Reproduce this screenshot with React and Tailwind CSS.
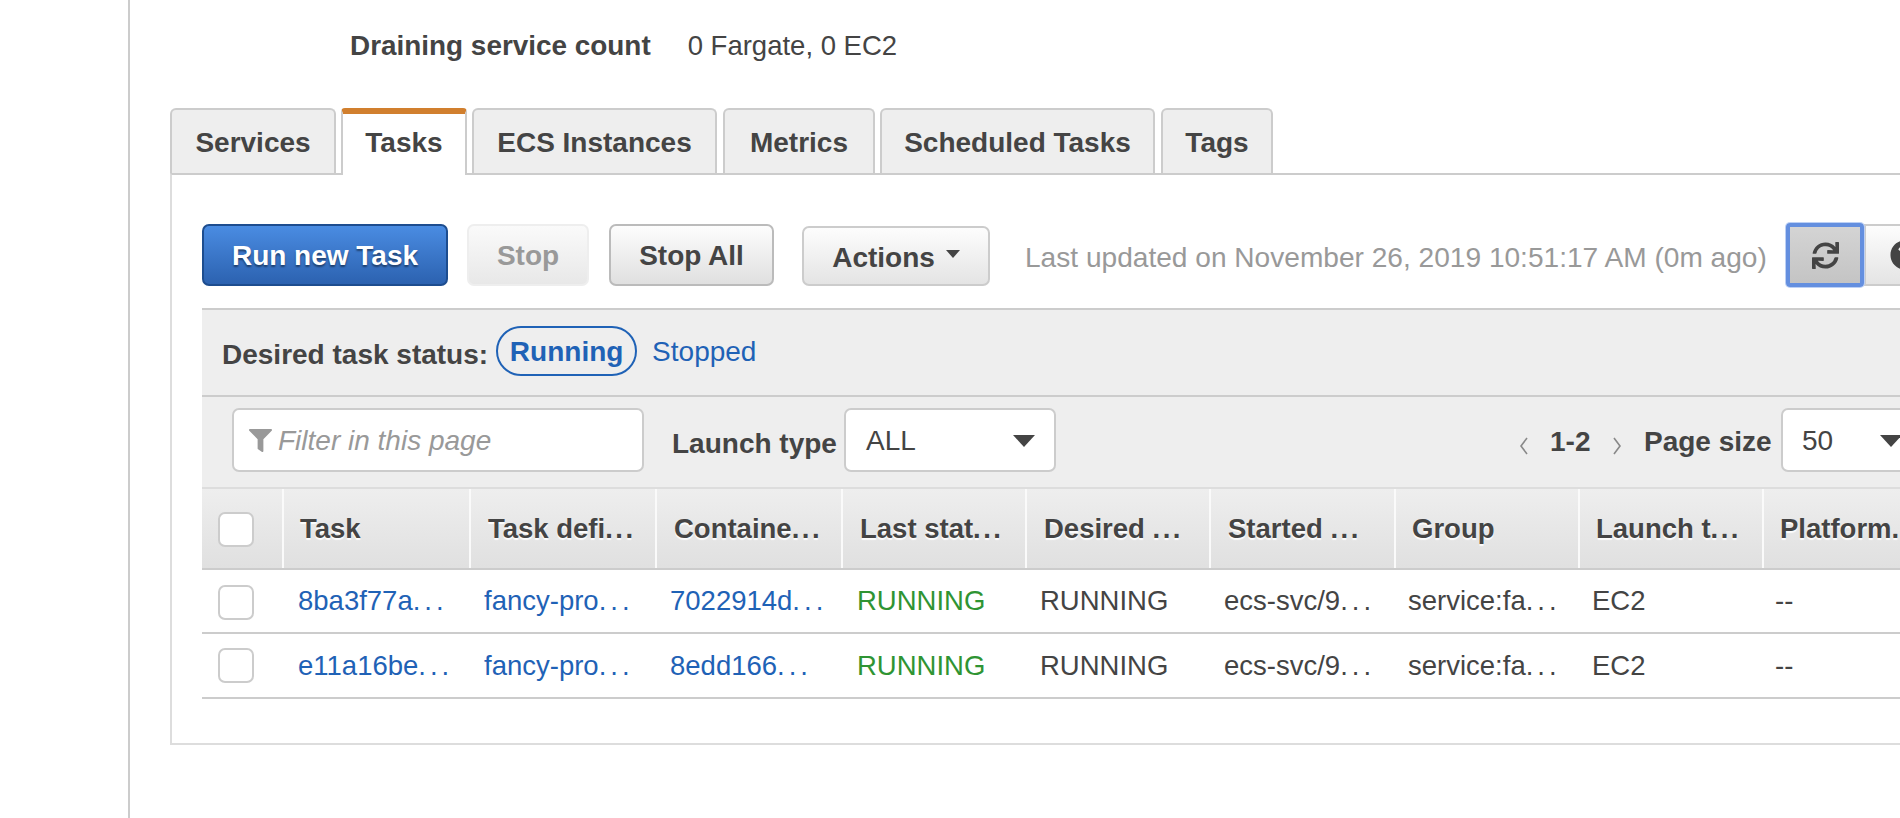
import React from "react";
import { FaFilter, FaSync, FaQuestionCircle } from "react-icons/fa";

const tabs = [
  { label: "Services", w: "w-[166px]", ml: "" },
  { label: "Tasks", w: "w-[126px]", ml: "ml-[5px]", active: true },
  { label: "ECS Instances", w: "w-[245px]", ml: "ml-[5px]" },
  { label: "Metrics", w: "w-[152px]", ml: "ml-[6px]" },
  { label: "Scheduled Tasks", w: "w-[275px]", ml: "ml-[5px]" },
  { label: "Tags", w: "w-[112px]", ml: "ml-[6px]" },
];

const grid = "grid grid-cols-[80px_187px_186px_186px_184px_184px_185px_184px_184px_200px]";
const headers = [
  ["Task", "", "pl-[16px]"],
  ["Task defi", "...", "pl-[17px]"],
  ["Containe", "...", "pl-[17px]"],
  ["Last stat", "...", "pl-[17px]"],
  ["Desired ", "...", "pl-[17px]"],
  ["Started ", "...", "pl-[17px]"],
  ["Group", "", "pl-[16px]"],
  ["Launch t", "...", "pl-[16px]"],
  ["Platform", "...", "pl-[16px]"],
];
const rows = [
  ["8ba3f77a", "fancy-pro", "7022914d"],
  ["e11a16be", "fancy-pro", "8edd166"],
];

function Dots({ w = "tracking-[4px]" }) {
  return <span className={w}>...</span>;
}

function Checkbox() {
  return <div className="w-[36px] h-[35px] rounded-[7px] border-2 border-[#ccc] bg-white" />;
}

function Caret() {
  return <div className="w-0 h-0 border-x-[11px] border-x-transparent border-t-[12px] border-t-[#444]" />;
}

function Chevron({ d }) {
  return (
    <svg width="12" height="18" viewBox="0 0 12 18" className="shrink-0 mt-[29px]">
      <polyline points={d} fill="none" stroke="#888" strokeWidth="1.6" />
    </svg>
  );
}

function Row({ cells, h, border, boxOffset }) {
  return (
    <div className={`${grid} ${h} ${border} items-center text-[27.5px]`}>
      <div className={`pl-[16px] ${boxOffset}`}><Checkbox /></div>
      <a className="pl-[16px] text-[#1f62b6] whitespace-nowrap">{cells[0]}<Dots /></a>
      <a className="pl-[15px] text-[#1f62b6] whitespace-nowrap">{cells[1]}<Dots /></a>
      <a className="pl-[15px] text-[#1f62b6] whitespace-nowrap">{cells[2]}<Dots /></a>
      <div className="pl-[16px] text-[#2f9433]">RUNNING</div>
      <div className="pl-[15px]">RUNNING</div>
      <div className="pl-[15px] whitespace-nowrap">ecs-svc/9<Dots /></div>
      <div className="pl-[14px] whitespace-nowrap">service:fa<Dots /></div>
      <div className="pl-[14px]">EC2</div>
      <div className="pl-[13px]">--</div>
    </div>
  );
}

export default function App() {
  return (
    <div className="w-[1900px] h-[818px] overflow-hidden bg-white text-[#444] text-[28px] leading-none font-['Liberation_Sans',Arial,sans-serif]">
      <div className="ml-[128px] h-full border-l-2 border-[#ccc] pl-[40px]">
        <div className="h-[108px] pt-[32px] flex">
          <span className="ml-[180px] font-bold text-[27.9px]">Draining service count</span>
          <span className="ml-[37px] text-[27.5px]">0 Fargate, 0 EC2</span>
        </div>

        <div className="flex h-[65px] relative z-10">
          {tabs.map((t) =>
            t.active ? (
              <div
                key={t.label}
                className={`${t.w} ${t.ml} h-[67px] bg-white border-t-[6px] border-t-[#d17f2e] border-x-2 border-x-[#ccc] rounded-t-[4px] font-bold flex items-center justify-center pb-[4px]`}
              >
                {t.label}
              </div>
            ) : (
              <div
                key={t.label}
                className={`${t.w} ${t.ml} h-[65px] bg-[#eee] border-2 border-b-0 border-[#ccc] rounded-t-[6px] font-bold flex items-center justify-center pt-[2px] text-[#444]`}
              >
                {t.label}
              </div>
            )
          )}
        </div>

        <div className="w-[1800px] h-[572px] border-2 border-[#ddd] border-t-[#ccc] pl-[30px] pt-[49px]">
          <div className="flex h-[84px] items-start">
            <button className="w-[246px] shrink-0 h-[62px] rounded-[7px] border-2 border-[#1d4d8f] bg-gradient-to-b from-[#4a8ce2] to-[#2c62b0] text-white font-bold pt-[1px] [text-shadow:0_2px_2px_rgba(0,0,0,0.45)]">
              Run new Task
            </button>
            <button className="ml-[19px] w-[122px] shrink-0 h-[62px] rounded-[7px] border-2 border-[#eee] bg-gradient-to-b from-[#fafafa] to-[#e8e8e8] text-[#999] font-bold pt-[2px]">
              Stop
            </button>
            <button className="ml-[20px] w-[165px] shrink-0 h-[62px] rounded-[7px] border-2 border-[#bbb] bg-gradient-to-b from-[#fdfdfd] to-[#e0e0e0] font-bold pt-[2px]">
              Stop All
            </button>
            <button className="ml-[28px] mt-[2px] w-[188px] shrink-0 h-[60px] rounded-[7px] border-2 border-[#ccc] bg-gradient-to-b from-[#fdfdfd] to-[#e4e4e4] font-bold flex items-center justify-center gap-[11px] pt-[3px]">
              Actions
              <span className="w-0 h-0 mb-[8px] border-x-[7px] border-x-transparent border-t-[8px] border-t-[#444]" />
            </button>
            <span className="ml-[35px] w-[742px] shrink-0 mt-[20px] text-[28.1px] text-[#999] whitespace-nowrap">
              Last updated on November 26, 2019 10:51:17 AM (0m ago)
            </span>
            <button className="ml-[19px] -mt-[1px] relative z-10 w-[78px] h-[64px] shrink-0 rounded-[4px] border-[4px] border-[#648fdf] bg-gradient-to-b from-[#d4d4d4] to-[#c4c4c4] shadow-[0_0_0_1px_#bcd0f5] flex items-center justify-center">
              <FaSync className="text-[27px] text-[#444]" />
            </button>
            <button className="w-[80px] h-[62px] shrink-0 border-2 border-[#ccc] bg-gradient-to-b from-[#fdfdfd] to-[#e4e4e4] flex items-center pl-[24px]">
              <FaQuestionCircle className="text-[30px] text-[#444]" />
            </button>
          </div>

          <div className="h-[89px] border-t-2 border-b-2 border-[#ccc] bg-[#eee] flex items-center">
            <span className="ml-[20px] mt-[5px] font-bold whitespace-nowrap">Desired task status:</span>
            <span className="ml-[8px] w-[141px] h-[50px] -mt-[4px] pt-[2px] rounded-[25px] border-2 border-[#1f62b6] flex items-center justify-center text-[#1f62b6] font-bold">
              Running
            </span>
            <span className="ml-[15px] -mt-[2px] text-[#1f62b6]">Stopped</span>
          </div>

          <div className="h-[90px] bg-[#eee] flex items-start pt-[11px]">
            <div className="ml-[30px] w-[412px] shrink-0 h-[64px] rounded-[7px] border-2 border-[#ccc] bg-white flex items-center pl-[15px] pt-[1px]">
              <FaFilter className="text-[23px] text-[#999]" />
              <span className="ml-[6px] italic text-[#999]">Filter in this page</span>
            </div>
            <span className="ml-[28px] w-[164px] shrink-0 mt-[22px] font-bold whitespace-nowrap">Launch type</span>
            <div className="ml-[8px] w-[212px] shrink-0 h-[64px] rounded-[7px] border-2 border-[#ccc] bg-white flex items-center justify-between pl-[20px] pr-[19px] pt-[1px]">
              <span>ALL</span>
              <Caret />
            </div>
            <span className="ml-[462px] shrink-0 flex"><Chevron d="9,1 3,9 9,17" /></span>
            <span className="ml-[20px] w-[42px] shrink-0 mt-[20px] font-bold whitespace-nowrap">1-2</span>
            <span className="ml-[19px] shrink-0 flex"><Chevron d="3,1 9,9 3,17" /></span>
            <span className="ml-[21px] w-[128px] shrink-0 mt-[20px] font-bold whitespace-nowrap">Page size</span>
            <div className="ml-[9px] w-[200px] h-[64px] shrink-0 rounded-[7px] border-2 border-[#ccc] bg-white flex items-center pl-[19px] pt-[1px]">
              <span>50</span>
              <span className="ml-[47px]"><Caret /></span>
            </div>
          </div>

          <div className={`${grid} h-[83px] border-t-2 border-b-2 border-t-[#ddd] border-b-[#ccc] bg-gradient-to-b from-[#eee] to-[#e0e0e0] font-bold text-[27.5px] [text-shadow:0_2px_1px_rgba(255,255,255,0.9)]`}>
            <div className="pl-[16px] pt-[2px] flex items-center"><Checkbox /></div>
            {headers.map(([h, e, pl]) => (
              <div key={h} className={`border-l-2 border-[#fafafa] ${pl} flex items-center whitespace-pre overflow-hidden`}>
                {h}
                {e && <Dots w="tracking-[2.5px]" />}
              </div>
            ))}
          </div>

          <Row cells={rows[0]} h="h-[64px]" border="border-b-2 border-[#ccc]" boxOffset="pt-[2px]" />
          <Row cells={rows[1]} h="h-[65px]" border="border-b-2 border-[#ccc]" boxOffset="" />
        </div>
      </div>
    </div>
  );
}
